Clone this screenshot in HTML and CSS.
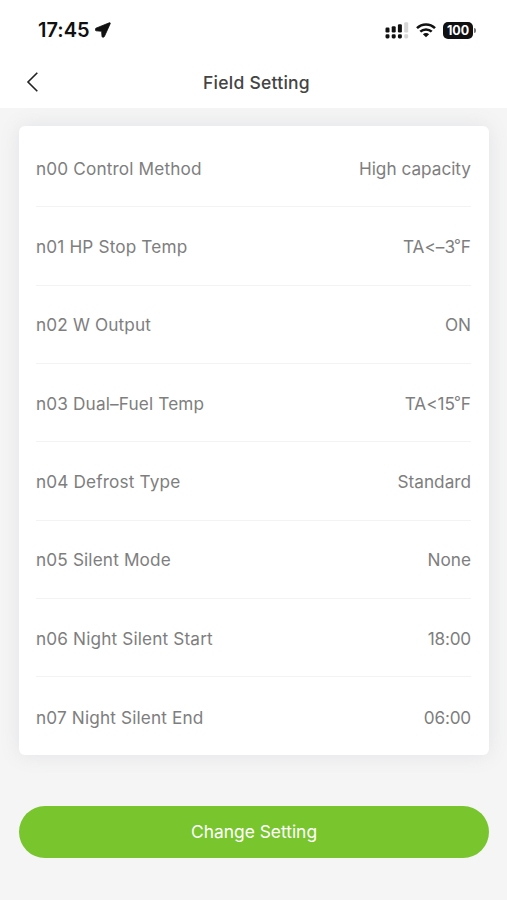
FILE: index.html
```html
<!DOCTYPE html>
<html lang="en">
<head>
  <meta charset="UTF-8">
  <meta name="viewport" content="width=device-width, initial-scale=1.0">
  <title>Field Setting</title>
  <link rel="stylesheet" href="styles.css">
</head>
<body>
  <header class="header">
    <div class="status-bar">
      <div class="status-left">
        <span class="time">17:45</span>
        <svg class="location" width="16" height="16" viewBox="0 0 16 16">
          <path d="M14.3 0.8 L0.9 6.2 C0 6.8 0.1 8.6 1.1 8.8 L6.6 9.3 L7 14.4 C7.2 15.5 8.8 15.6 9.4 14.5 L15.2 1.7 C15.5 0.9 15 0.5 14.3 0.8 Z" fill="#111" stroke="#111" stroke-width="0.8"/>
        </svg>
      </div>
      <div class="status-right">
        <svg class="signal" width="24" height="17" viewBox="0 0 24 17">
          <g fill="#111">
            <rect x="0.5" y="5.5" width="4" height="5" rx="1.2"/>
            <rect x="6.7" y="4.2" width="4" height="6.3" rx="1.2"/>
            <rect x="12.9" y="2.2" width="4" height="8.3" rx="1.2"/>
            <rect x="0.5" y="12.3" width="4" height="4.2" rx="1.4"/>
            <rect x="6.7" y="12.3" width="4" height="4.2" rx="1.4"/>
            <rect x="12.9" y="12.3" width="4" height="4.2" rx="1.4"/>
          </g>
          <g fill="#d6d6d6">
            <rect x="19.2" y="0.3" width="4" height="10.2" rx="1.2"/>
            <rect x="19.2" y="12.3" width="4" height="4.2" rx="1.4"/>
          </g>
        </svg>
        <svg class="wifi" width="20" height="15" viewBox="0 0 20 15">
          <g fill="none" stroke="#111" stroke-width="2.5">
            <path d="M1 5.2 C6 0.2 14 0.2 19 5.2"/>
            <path d="M4.3 8.7 C7.4 5.6 12.6 5.6 15.7 8.7"/>
          </g>
          <path d="M10 14.3 L6.9 11.2 C8.7 9.6 11.3 9.6 13.1 11.2 Z" fill="#111"/>
        </svg>
        <div class="battery">
          <span class="battery-level">100</span>
          <span class="battery-tip"></span>
        </div>
      </div>
    </div>
    <div class="nav-bar">
      <a class="back" href="#" aria-label="Back">
        <svg width="13" height="22" viewBox="0 0 13 22">
          <path d="M11.3 1.7 L2 11 L11.3 20.3" fill="none" stroke="#222" stroke-width="1.6"/>
        </svg>
      </a>
      <h1 class="title">Field Setting</h1>
    </div>
  </header>

  <main class="content">
    <div class="card">
      <div class="row">
        <span class="label">n00 Control Method</span>
        <span class="value">High capacity</span>
      </div>
      <div class="row">
        <span class="label">n01 HP Stop Temp</span>
        <span class="value">TA&lt;–3<span class="degree">°</span>F</span>
      </div>
      <div class="row">
        <span class="label">n02 W Output</span>
        <span class="value">ON</span>
      </div>
      <div class="row">
        <span class="label">n03 Dual–Fuel Temp</span>
        <span class="value">TA&lt;15<span class="degree">°</span>F</span>
      </div>
      <div class="row">
        <span class="label">n04 Defrost Type</span>
        <span class="value">Standard</span>
      </div>
      <div class="row">
        <span class="label">n05 Silent Mode</span>
        <span class="value">None</span>
      </div>
      <div class="row">
        <span class="label">n06 Night Silent Start</span>
        <span class="value time-value">18:00</span>
      </div>
      <div class="row">
        <span class="label">n07 Night Silent End</span>
        <span class="value time-value">06:00</span>
      </div>
    </div>
    <button class="change-btn">Change Setting</button>
  </main>
</body>
</html>
```
FILE: styles.css
```css
* {
  box-sizing: border-box;
}
body {
  margin: 0;
  min-height: 900px;
  background-color: #f5f5f5;
  font-family: Inter, 'Liberation Sans', sans-serif;
  font-weight: 400;
  font-variant-ligatures: none;
  font-feature-settings: 'calt' 0;
  color: #7e7e7e;
}
.header {
  height: 108px;
  background-color: #fff;
}
.status-bar {
  display: flex;
  justify-content: space-between;
  align-items: center;
  height: 60px;
  padding: 0 31px 0 38px;
}
.status-left,
.status-right {
  display: flex;
  align-items: center;
}
.time {
  font-size: 20px;
  font-weight: 600;
  color: #111;
}
.location {
  margin-left: 5px;
}
.wifi {
  margin: 0 7px 0 7px;
}
.battery {
  display: flex;
  align-items: center;
}
.battery-level {
  width: 30px;
  height: 17px;
  border-radius: 5px;
  background-color: #111;
  color: #fff;
  font-size: 12.5px;
  font-weight: 700;
  line-height: 17px;
  text-align: center;
}
.battery-tip {
  width: 2px;
  height: 5px;
  margin-left: 1px;
  border-radius: 0 2px 2px 0;
  background-color: #777;
}
.nav-bar {
  display: grid;
  grid-template-columns: 60px 1fr 60px;
  align-items: center;
  height: 44px;
}
.back {
  display: flex;
  padding-left: 26px;
}
.title {
  margin: 0;
  padding-left: 6px;
  font-size: 17.5px;
  font-weight: 500;
  letter-spacing: 0.25px;
  text-align: center;
  color: #444;
}
.content {
  padding: 18px 18px 0 19px;
}
.card {
  height: 629px;
  padding: 3px 18px 0 17px;
  border-radius: 6px;
  background-color: #fff;
  box-shadow: 0 0 20px rgba(110, 120, 150, 0.14);
}
.row {
  display: flex;
  justify-content: space-between;
  align-items: center;
  height: 78.35px;
  padding-top: 1px;
  border-bottom: 1px solid #f3f3f3;
  font-size: 17.2px;
}
.row:last-child {
  border-bottom: none;
}
.label {
  letter-spacing: 0.15px;
}
.time-value {
  letter-spacing: -0.2px;
}
.degree {
  margin-left: -1px;
  font-size: 15px;
  line-height: 1;
  vertical-align: 3px;
}
.change-btn {
  display: block;
  width: 100%;
  height: 52px;
  margin-top: 51px;
  padding-bottom: 3px;
  border: none;
  border-radius: 26px;
  background-color: #78c52e;
  color: #fff;
  font-family: inherit;
  font-size: 17.4px;
  font-weight: 400;
  cursor: pointer;
}
```
